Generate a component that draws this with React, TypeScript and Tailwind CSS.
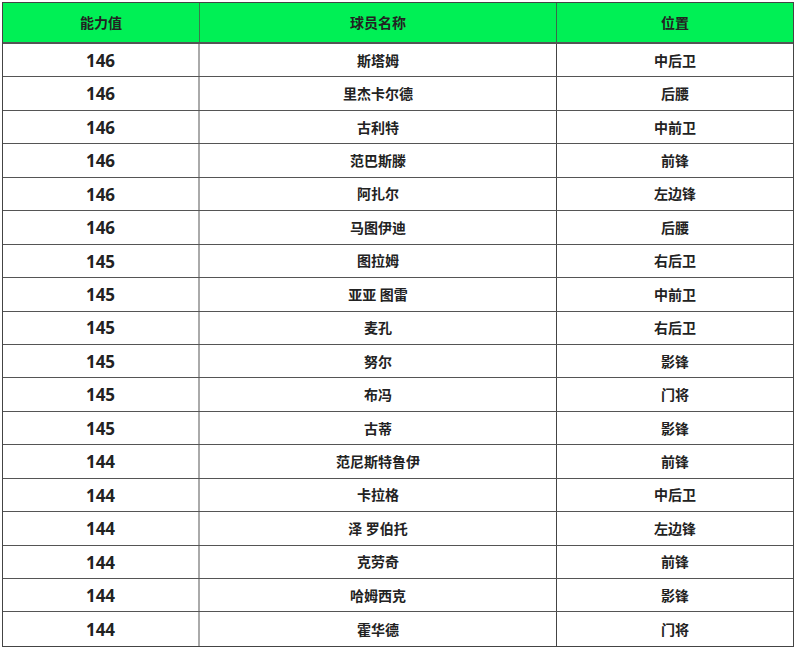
import React from "react";

const rows: [string, string, string][] = [
  ["146", "斯塔姆", "中后卫"],
  ["146", "里杰卡尔德", "后腰"],
  ["146", "古利特", "中前卫"],
  ["146", "范巴斯滕", "前锋"],
  ["146", "阿扎尔", "左边锋"],
  ["146", "马图伊迪", "后腰"],
  ["145", "图拉姆", "右后卫"],
  ["145", "亚亚 图雷", "中前卫"],
  ["145", "麦孔", "右后卫"],
  ["145", "努尔", "影锋"],
  ["145", "布冯", "门将"],
  ["145", "古蒂", "影锋"],
  ["144", "范尼斯特鲁伊", "前锋"],
  ["144", "卡拉格", "中后卫"],
  ["144", "泽 罗伯托", "左边锋"],
  ["144", "克劳奇", "前锋"],
  ["144", "哈姆西克", "影锋"],
  ["144", "霍华德", "门将"],
];

const cjk = { fontFamily: '"Open Sans", "Noto Sans CJK SC", sans-serif' };

export default function App() {
  return (
    <div className="w-[800px] h-[654px] bg-white pt-[2px] pl-[2px]" style={cjk}>
      <div className="w-[792px] border border-[#444] text-[#222]">
        <div className="grid grid-cols-[197px_357px_1fr] h-[41px] bg-[#00f055] border-b-2 border-[#555] font-bold text-[14px]">
          <div className="flex items-center justify-center border-r border-[#3a7a4a]">能力值</div>
          <div className="flex items-center justify-center border-r border-[#3a6a4a]">球员名称</div>
          <div className="flex items-center justify-center">位置</div>
        </div>
        {rows.map((r, i) => (
          <div
            key={i}
            className={`grid grid-cols-[197px_357px_1fr] h-[33.45px] font-bold ${i < rows.length - 1 ? "border-b border-[#555]" : ""}`}
          >
            <div className="flex items-center justify-center border-r-2 border-[#aaa] text-[17px] pt-[1px]">{r[0]}</div>
            <div className="flex items-center justify-center border-r border-[#444] text-[14px]">{r[1]}</div>
            <div className="flex items-center justify-center text-[14px]">{r[2]}</div>
          </div>
        ))}
      </div>
    </div>
  );
}
